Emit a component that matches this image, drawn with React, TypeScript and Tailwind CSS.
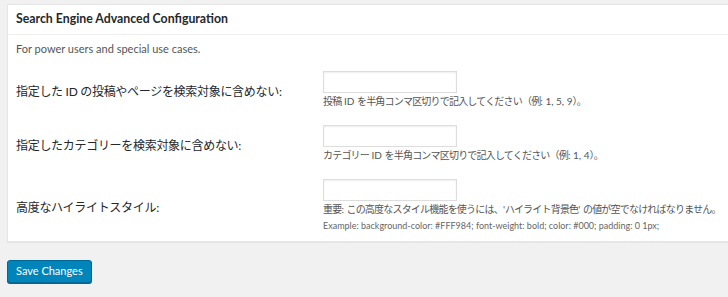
const font = { fontFamily: 'Lato, "Noto Sans CJK JP", sans-serif' }

const Row = ({ label, children }: { label: string; children: React.ReactNode }) => (
    <div className="flex items-center">
        <div className="w-[307px] shrink-0 pt-[5px] text-[12px] tracking-[-0.3px] text-[#23282d]">{label}</div>
        <div className="flex flex-col">
            <input type="text" className="w-[134px] h-[22px] border border-[#ddd] bg-white shadow-[inset_0_1px_2px_rgba(0,0,0,0.07)] outline-none" />
            {children}
        </div>
    </div>
)

// latin bits inside the compressed japanese hints keep normal spacing
const L = ({ children }: { children: React.ReactNode }) => <span className="tracking-normal">{children}</span>

export default function App() {
    return (
        <div className="w-[728px] h-[297px] bg-[#f1f1f1] pt-[4px] pl-[7px] overflow-hidden" style={font}>
            <div className="bg-white border border-[#e5e5e5] border-r-0 shadow-[0_1px_1px_rgba(0,0,0,0.04)] h-[238px]">
                <div className="h-[30px] border-b border-[#eee] px-[8px] flex items-center">
                    <h2 className="text-[12.3px] font-bold text-[#23282d]">Search Engine Advanced Configuration</h2>
                </div>
                <div className="px-[8px]">
                    <p className="text-[11px] leading-[16px] text-[#555] mt-[6px] mb-[14px]">For power users and special use cases.</p>
                    <div className="flex flex-col gap-[17px]">
                        <Row label="指定した ID の投稿やページを検索対象に含めない:">
                            <p className="text-[10px] leading-[14px] tracking-[-0.8px] text-[#555] mt-[1px] whitespace-nowrap">
                                投稿<L> ID </L>を半角コンマ区切りで記入してください（例<L>: 1, 5, 9</L>）。
                            </p>
                        </Row>
                        <Row label="指定したカテゴリーを検索対象に含めない:">
                            <p className="text-[10px] leading-[14px] tracking-[-0.8px] text-[#555] mt-[1px] whitespace-nowrap">
                                カテゴリー<L> ID </L>を半角コンマ区切りで記入してください（例<L>: 1, 4</L>）。
                            </p>
                        </Row>
                        <Row label="高度なハイライトスタイル:">
                            <p className="text-[10px] leading-[14px] tracking-[-0.8px] text-[#555] mt-[1px] whitespace-nowrap">
                                重要<L>: </L>この高度なスタイル機能を使うには、<L>'</L>ハイライト背景色<L>' </L>の値が空でなければなりません。
                            </p>
                            <p className="text-[9px] leading-[12px] text-[#666] mt-[4px] whitespace-nowrap">Example: background-color: #FFF984; font-weight: bold; color: #000; padding: 0 1px;</p>
                        </Row>
                    </div>
                </div>
            </div>
            <button className="mt-[18px] h-[23px] px-[8px] rounded-[3px] bg-[#0085ba] border border-[#006799] text-white text-[11px] shadow-[0_1px_0_#006799]">
                Save Changes
            </button>
        </div>
    )
}
